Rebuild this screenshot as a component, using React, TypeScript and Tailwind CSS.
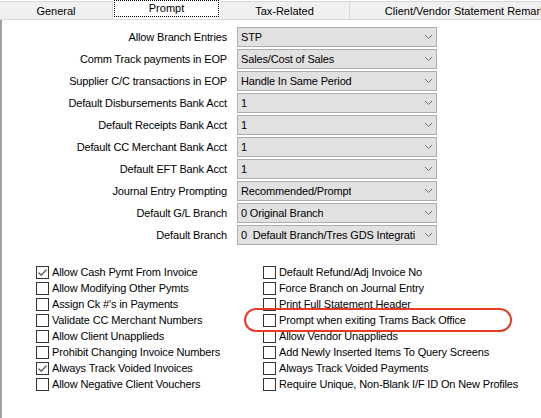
import React from 'react';

const font = { fontFamily: '"Liberation Sans", Arial, sans-serif' };

const tabs = [
  { name: 'General', w: 'w-[113px]' },
  { name: 'Prompt', w: 'w-[107px]', active: true },
  { name: 'Tax-Related', w: 'w-[130px]' },
  { name: 'Client/Vendor Statement Remarks', w: 'w-[237px]' },
];

const fields = [
  ['Allow Branch Entries', 'STP'],
  ['Comm Track payments in EOP', 'Sales/Cost of Sales'],
  ['Supplier C/C transactions in EOP', 'Handle In Same Period'],
  ['Default Disbursements Bank Acct', '1'],
  ['Default Receipts Bank Acct', '1'],
  ['Default CC Merchant Bank Acct', '1'],
  ['Default EFT Bank Acct', '1'],
  ['Journal Entry Prompting', 'Recommended/Prompt'],
  ['Default G/L Branch', '0 Original Branch'],
  ['Default Branch', '0  Default Branch/Tres GDS Integrati'],
];

const leftChecks: [string, boolean][] = [
  ['Allow Cash Pymt From Invoice', true],
  ['Allow Modifying Other Pymts', false],
  ["Assign Ck #'s in Payments", false],
  ['Validate CC Merchant Numbers', false],
  ['Allow Client Unapplieds', false],
  ['Prohibit Changing Invoice Numbers', false],
  ['Always Track Voided Invoices', true],
  ['Allow Negative Client Vouchers', false],
];

const rightChecks: [string, boolean][] = [
  ['Default Refund/Adj Invoice No', false],
  ['Force Branch on Journal Entry', false],
  ['Print Full Statement Header', false],
  ['Prompt when exiting Trams Back Office', false],
  ['Allow Vendor Unapplieds', false],
  ['Add Newly Inserted Items To Query Screens', false],
  ['Always Track Voided Payments', false],
  ['Require Unique, Non-Blank I/F ID On New Profiles', false],
];

const Chevron = () => (
  <svg width="9" height="6" viewBox="0 0 9 6" className="shrink-0">
    <path d="M1 1 L4.5 4.5 L8 1" fill="none" stroke="#707070" strokeWidth="1" />
  </svg>
);

const Check = ({ label, checked }: { label: string; checked: boolean }) => (
  <div className="flex items-center h-[16px]">
    <div className="w-[13px] h-[13px] border border-[#333333] bg-white flex items-center justify-center shrink-0">
      {checked && (
        <svg width="11" height="11" viewBox="0 0 11 11">
          <path d="M1.5 5.5 L4.2 8.2 L9.5 2.5" fill="none" stroke="#5c5c5c" strokeWidth="1.3" />
        </svg>
      )}
    </div>
    <span className="ml-[3px] whitespace-nowrap text-[11px] tracking-[-0.15px] text-black">{label}</span>
  </div>
);

const App = () => {
  return (
    <div className="relative w-[541px] h-[418px] bg-white overflow-hidden" style={font}>
      {/* Tab strip */}
      <div className="flex h-[20px] items-end border-b border-[#d9d9d9] bg-white overflow-hidden">
        {tabs.map((t) =>
          t.active ? (
            <div key={t.name} className={`${t.w} h-[20px] shrink-0 bg-white px-[1px] pt-[1px]`}>
              <div className="h-[17px] border border-dotted border-black flex items-center justify-center text-[11px] text-black">
                {t.name}
              </div>
            </div>
          ) : (
            <div
              key={t.name}
              className={`${t.w} h-[18px] shrink-0 bg-[#f0f0f0] border-t border-r border-[#d9d9d9] flex items-center justify-center pt-[1px] text-[11px] text-black whitespace-nowrap`}
            >
              {t.name}
            </div>
          )
        )}
      </div>

      {/* Panel */}
      <div className="border-l-2 border-[#a0a0a0] h-[398px] pt-[7px]">
        <div className="flex flex-col gap-[2px]">
          {fields.map(([label, value]) => (
            <div key={label} className="flex items-center h-[20px]">
              <div className="w-[225px] text-right text-[11px] tracking-[-0.15px] text-black whitespace-nowrap">{label}</div>
              <div className="ml-[10px] w-[200px] h-[20px] bg-[#e1e1e1] border border-[#adadad] flex items-center justify-between pl-[3px] pr-[3px]">
                <span className="text-[11px] tracking-[-0.15px] text-black whitespace-pre overflow-hidden">{value}</span>
                <Chevron />
              </div>
            </div>
          ))}
        </div>

        <div className="flex mt-[19px] pl-[34px]">
          <div className="w-[227px] flex flex-col">
            {leftChecks.map(([l, c]) => (
              <Check key={l} label={l} checked={c} />
            ))}
          </div>
          <div className="flex flex-col">
            {rightChecks.map(([l, c]) => (
              <Check key={l} label={l} checked={c} />
            ))}
          </div>
        </div>
      </div>

      {/* Red annotation ellipse */}
      <div className="absolute left-[244px] top-[308px] w-[268px] h-[24px] rounded-[12px] border-[2.5px] border-[#e63b24]" />
    </div>
  );
};

export default App;
